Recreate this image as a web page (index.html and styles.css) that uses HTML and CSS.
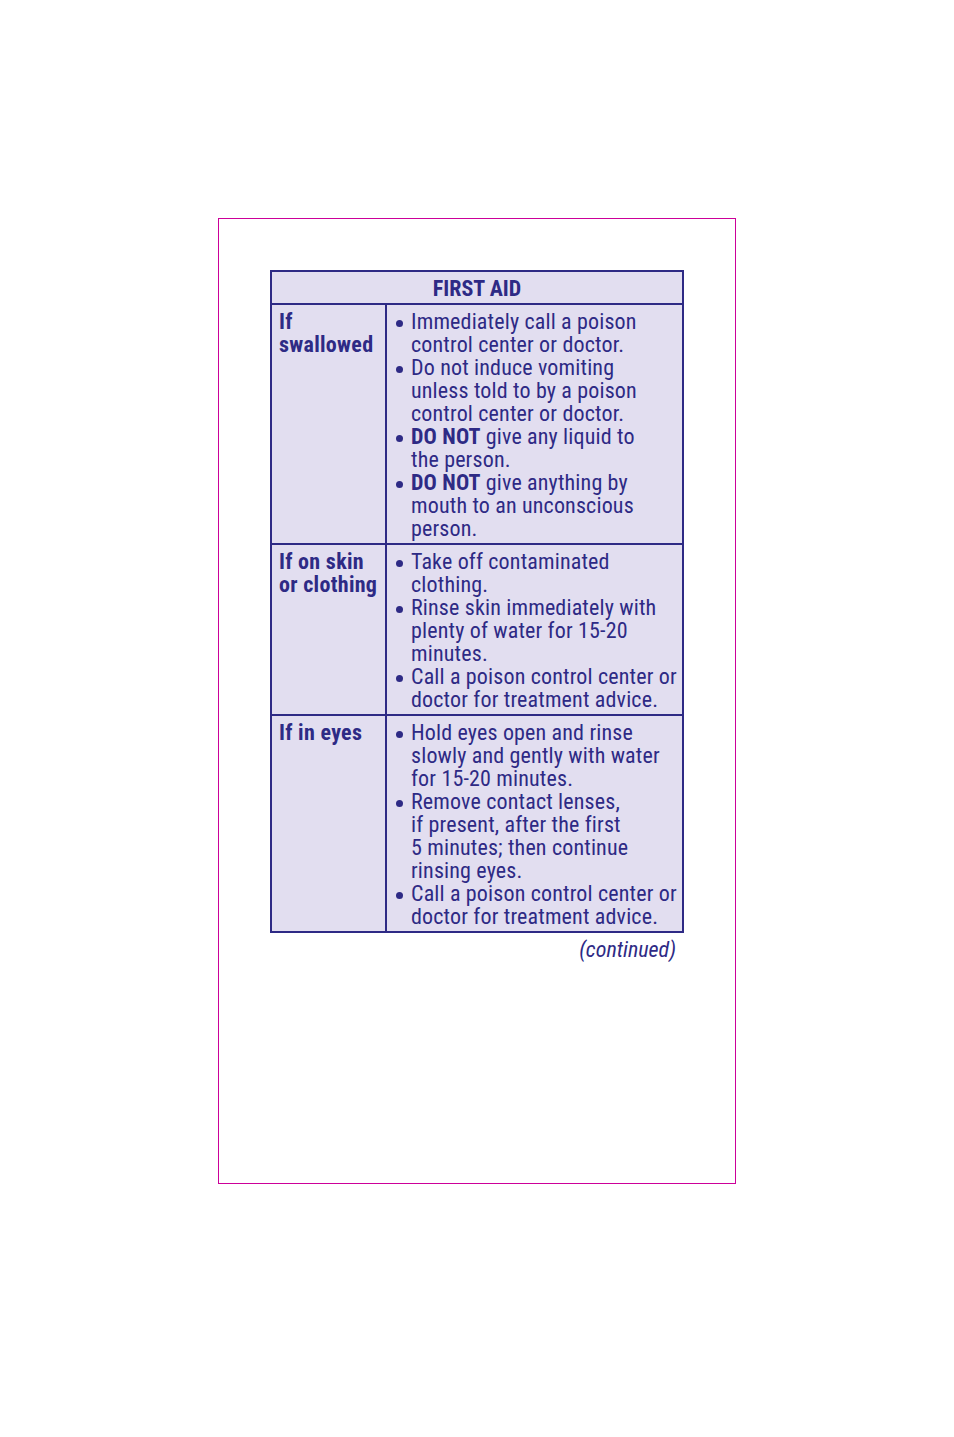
FILE: index.html
```html
<!DOCTYPE html>
<html>
<head>
<meta charset="utf-8">
<link rel="stylesheet" href="styles.css">
</head>
<body>
<div class="panel">
  <div class="table">
    <div class="head">FIRST AID</div>
    <div class="row">
      <div class="label">If<br>swallowed</div>
      <ul class="items">
        <li>Immediately call a poison<br>control center or doctor.</li>
        <li>Do not induce vomiting<br>unless told to by a poison<br>control center or doctor.</li>
        <li><b>DO NOT</b> give any liquid to<br>the person.</li>
        <li><b>DO NOT</b> give anything by<br>mouth to an unconscious<br>person.</li>
      </ul>
    </div>
    <div class="row">
      <div class="label">If on skin<br>or clothing</div>
      <ul class="items">
        <li>Take off contaminated<br>clothing.</li>
        <li>Rinse skin immediately with<br>plenty of water for 15-20<br>minutes.</li>
        <li>Call a poison control center or<br>doctor for treatment advice.</li>
      </ul>
    </div>
    <div class="row">
      <div class="label">If in eyes</div>
      <ul class="items">
        <li>Hold eyes open and rinse<br>slowly and gently with water<br>for 15-20 minutes.</li>
        <li>Remove contact lenses,<br>if present, after the first<br>5 minutes; then continue<br>rinsing eyes.</li>
        <li>Call a poison control center or<br>doctor for treatment advice.</li>
      </ul>
    </div>
  </div>
  <div class="cont">(continued)</div>
</div>
</body>
</html>
```
FILE: styles.css
```css
html, body {
  margin: 0;
  padding: 0;
  background: #ffffff;
}
body {
  padding: 218px 0 0 218px;
  font-family: "Roboto", "Liberation Sans", Arial, sans-serif;
  font-stretch: 75%;
  color: #2e2a85;
}
.panel {
  box-sizing: border-box;
  width: 518px;
  height: 966px;
  border: 1px solid #cc0099;
  padding: 51px 0 0 51px;
}
.table {
  box-sizing: border-box;
  width: 414px;
  border: 2px solid #2e2a85;
  background: #e2def0;
}
.head {
  text-align: center;
  font-weight: 700;
  font-size: 22px;
  line-height: 23px;
  height: 33px;
  padding-top: 5px;
  box-sizing: border-box;
  border-bottom: 2px solid #2e2a85;
}
.row {
  display: grid;
  grid-template-columns: 115px 1fr;
  border-bottom: 2px solid #2e2a85;
}
.row:last-child {
  border-bottom: none;
}
.label {
  font-weight: 700;
  font-size: 22px;
  letter-spacing: 0.3px;
  line-height: 23px;
  padding: 5px 2px 3px 7px;
  white-space: nowrap;
  border-right: 2px solid #2e2a85;
}
.items {
  list-style: none;
  margin: 0;
  padding: 5px 2px 3px 24px;
  font-size: 22px;
  font-weight: 430;
  letter-spacing: 0.16px;
  line-height: 23px;
  white-space: nowrap;
}
.items li {
  position: relative;
}
.items b {
  font-weight: 700;
}
.items li::before {
  content: "";
  position: absolute;
  left: -15px;
  top: 10px;
  width: 7px;
  height: 7px;
  border-radius: 50%;
  background: #2e2a85;
}
.cont {
  width: 406px;
  text-align: right;
  font-style: italic;
  font-size: 22px;
  line-height: 23px;
  padding-top: 5px;
}
```
